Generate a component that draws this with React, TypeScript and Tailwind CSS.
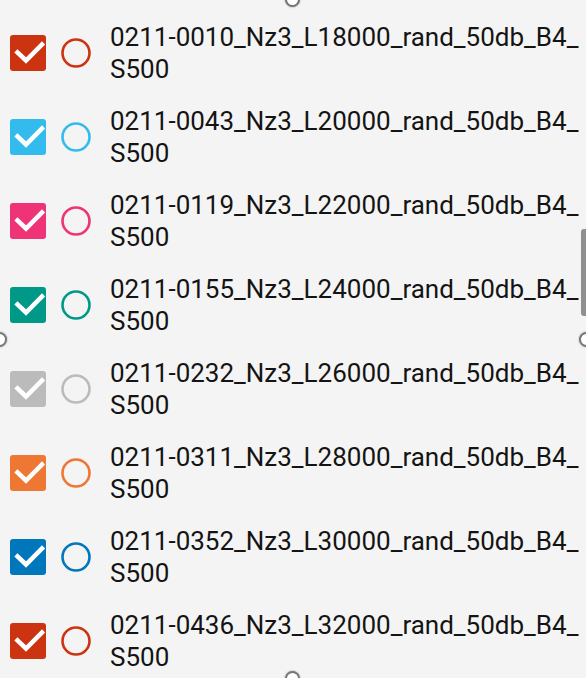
import React from 'react';

type Series = { name: string; color: string };

const series: Series[] = [
  { name: '0211-0010_Nz3_L18000_rand_50db_B4_S500', color: '#cc3311' },
  { name: '0211-0043_Nz3_L20000_rand_50db_B4_S500', color: '#33bbee' },
  { name: '0211-0119_Nz3_L22000_rand_50db_B4_S500', color: '#ee3377' },
  { name: '0211-0155_Nz3_L24000_rand_50db_B4_S500', color: '#009988' },
  { name: '0211-0232_Nz3_L26000_rand_50db_B4_S500', color: '#bbbbbb' },
  { name: '0211-0311_Nz3_L28000_rand_50db_B4_S500', color: '#ee7733' },
  { name: '0211-0352_Nz3_L30000_rand_50db_B4_S500', color: '#0077bb' },
  { name: '0211-0436_Nz3_L32000_rand_50db_B4_S500', color: '#cc3311' },
];

// resize handles sit on the edges of the panel
const Handle: React.FC<{ className: string }> = ({ className }) => (
  <div
    className={`absolute w-[15px] h-[15px] rounded-full bg-white border-2 border-[#777777] shadow-[0_0_2px_rgba(0,0,0,0.4)] ${className}`}
  />
);

const LegendRow: React.FC<{ item: Series }> = ({ item }) => (
  <div className="h-[84px] flex items-center">
    {/* checkbox */}
    <div className="w-[36px] h-[36px] rounded-[3px] flex-shrink-0" style={{ backgroundColor: item.color }}>
      <svg width="36" height="36" viewBox="0 0 36 36">
        <polyline points="7.5,17.5 16,25.5 32,9.5" fill="none" stroke="white" strokeWidth="4.5" strokeLinecap="square" />
      </svg>
    </div>
    {/* marker */}
    <svg width="32" height="32" viewBox="0 0 32 32" className="ml-[14px] flex-shrink-0">
      <circle cx="16" cy="16" r="13.5" fill="none" stroke={item.color} strokeWidth="2.6" />
    </svg>
    <div className="ml-[18px] flex-1 text-[26px] leading-[32px] text-[#141414] break-all font-['Roboto',sans-serif]">
      {item.name}
    </div>
  </div>
);

export default function App() {
  return (
    <div className="w-[586px] h-[678px] bg-[#f4f4f4] relative overflow-hidden">
      <div className="flex flex-col pt-[11px] pl-[10px]">
        {series.map((s, i) => (
          <LegendRow key={i} item={s} />
        ))}
      </div>

      {/* overlay scrollbar */}
      <div className="absolute right-0 top-[229px] w-[5px] h-[87px] rounded-l-[3px] bg-[#8f8f8f]" />

      <Handle className="left-[285px] top-[-8px]" />
      <Handle className="left-[-8px] top-[332px]" />
      <Handle className="right-[-8px] top-[332px]" />
      <Handle className="left-[285px] bottom-[-8px]" />
    </div>
  );
}
